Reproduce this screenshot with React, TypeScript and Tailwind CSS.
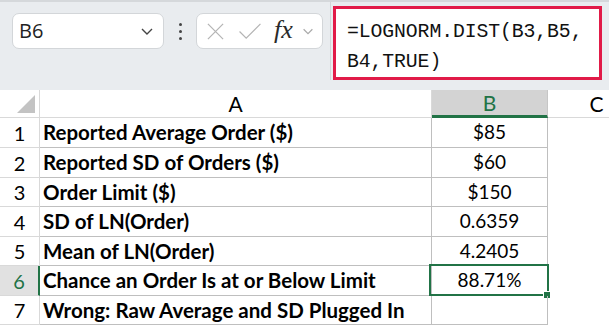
import React from 'react';

const rows = [
  { n: 1, label: 'Reported Average Order ($)', value: '$85', h: 'h-[30px]' },
  { n: 2, label: 'Reported SD of Orders ($)', value: '$60', h: 'h-[30px]' },
  { n: 3, label: 'Order Limit ($)', value: '$150', h: 'h-[29px]' },
  { n: 4, label: 'SD of LN(Order)', value: '0.6359', h: 'h-[30px]' },
  { n: 5, label: 'Mean of LN(Order)', value: '4.2405', h: 'h-[29px]' },
  { n: 6, label: 'Chance an Order Is at or Below Limit', value: '88.71%', h: 'h-[30px]' },
  { n: 7, label: 'Wrong: Raw Average and SD Plugged In', value: '', h: 'h-[29px]' },
];

const Chevron = ({ className }: { className?: string }) => (
  <svg viewBox="0 0 16 16" className={className} fill="none" stroke="currentColor" strokeWidth="1.4">
    <path d="M3 6l5 5 5-5" />
  </svg>
);

const App: React.FC = () => {
  return (
    <div className="w-[609px] h-[327px] overflow-hidden bg-white" style={{ fontFamily: 'Lato, "Noto Sans", sans-serif' }}>
      {/* toolbar */}
      <div className="h-[90px] bg-[#e9ecef] border-t-[2px] border-[#d5d8db]">
        <div className="flex items-start">
          <div className="mt-[11px] ml-[12px] w-[152px] h-[36px] bg-white border border-[#d3d6d9] rounded-[7px] flex items-center pl-[6px] pr-[8px]">
            <span className="flex-1 text-[20px] text-[#222]" style={{ fontFamily: '"Open Sans", sans-serif' }}>B6</span>
            <Chevron className="w-[16px] h-[16px] text-[#444]" />
          </div>
          <div className="mt-[21px] w-[32px] flex flex-col items-center gap-[4px]">
            <span className="w-[3px] h-[3px] bg-[#444] rounded-full" />
            <span className="w-[3px] h-[3px] bg-[#444] rounded-full" />
            <span className="w-[3px] h-[3px] bg-[#444] rounded-full" />
          </div>
          <div className="mt-[11px] w-[127px] h-[36px] bg-white border border-[#d3d6d9] rounded-[7px] flex items-center pl-[9px]">
            <svg viewBox="0 0 20 20" className="w-[19px] h-[19px]" fill="none" stroke="#b4b4b4" strokeWidth="1.3">
              <path d="M2 2l16 16M18 2L2 18" />
            </svg>
            <svg viewBox="0 0 24 20" className="ml-[13px] w-[24px] h-[19px]" fill="none" stroke="#b4b4b4" strokeWidth="1.3">
              <path d="M1 10l7 7L23 2" />
            </svg>
            <span className="ml-[12px] text-[26px] italic text-[#2a2a2a] leading-none -mt-[3px]" style={{ fontFamily: '"Liberation Serif", serif' }}>fx</span>
            <Chevron className="ml-[8px] w-[14px] h-[14px] text-[#aaa]" />
          </div>
          <div className="ml-[7px] w-px h-[78px] bg-[#d3d6d9]" />
          <div className="mt-[4px] ml-[2px] w-[269px] h-[74px] bg-white border-[3px] border-[#e11b48] pl-[11px] pt-[8px]">
            <div className="text-[19.8px] leading-[30px] text-[#111] tracking-[-0.1px]" style={{ fontFamily: '"Liberation Mono", monospace' }}>
              =LOGNORM.DIST(B3,B5,
              <br />
              B4,TRUE)
            </div>
          </div>
        </div>
      </div>

      {/* grid */}
      <div className="text-[19px] text-black">
        <div className="flex h-[28px] bg-white">
          <div className="w-[40px] shrink-0 border-r border-b border-[#d9d9d9] relative bg-white">
            <svg viewBox="0 0 20 20" className="absolute right-[4px] bottom-[4px] w-[18px] h-[18px]">
              <path d="M20 0L20 20L0 20Z" fill="#c3c3c3" />
            </svg>
          </div>
          <div className="w-[392px] shrink-0 border-r border-b border-[#d9d9d9] flex items-center justify-center text-[21px] leading-none">A</div>
          <div className="w-[116px] shrink-0 bg-[#d3d3d3] border-r border-[#c6c6c6] border-b-[3px] border-b-[#217346] flex items-center justify-center text-[21px] leading-none text-[#217346]">B</div>
          <div className="w-[98px] shrink-0 border-r border-b border-[#d9d9d9] flex items-center justify-center text-[21px] leading-none">C</div>
        </div>
        {rows.map((r) => {
          const sel = r.n === 6;
          return (
            <div key={r.n} className={`flex ${r.h}`}>
              <div
                className={
                  sel
                    ? 'w-[40px] shrink-0 bg-[#e1e1e1] border-r-[2px] border-r-[#217346] border-b border-b-[#d9d9d9] flex items-center justify-center text-[20px] text-[#217346]'
                    : 'w-[40px] shrink-0 border-r border-b border-[#d9d9d9] flex items-center justify-center text-[20px]'
                }
              >
                {r.n}
              </div>
              <div className="w-[392px] shrink-0 border-r border-b border-[#bfbfbf] flex items-center pl-[3px] text-[20.5px] font-bold whitespace-nowrap overflow-hidden">
                {r.label}
              </div>
              <div className="w-[116px] shrink-0 border-r border-b border-[#bfbfbf] flex items-center justify-center relative">
                {r.value}
                {sel && (
                  <>
                    <span className="absolute -left-[3px] -top-[2px] -right-[2px] -bottom-[1px] border-[2px] border-[#217346]" />
                    <span className="absolute -right-[4px] -bottom-[4px] w-[6px] h-[6px] bg-[#217346] border border-white box-content" />
                  </>
                )}
              </div>
              <div className="flex-1" />
            </div>
          );
        })}
      </div>
    </div>
  );
};

export default App;
